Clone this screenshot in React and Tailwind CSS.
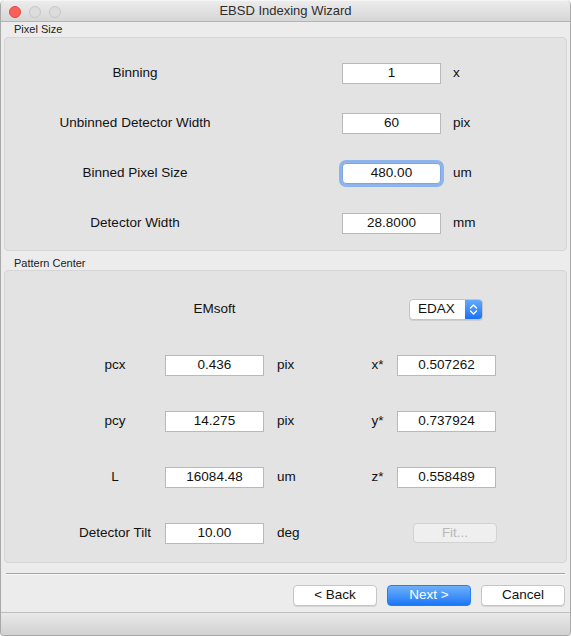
import React from "react";

const font = { fontFamily: '"Liberation Sans", Arial, sans-serif' };

function Input({ value, focused }) {
  if (focused) {
    return (
      <div className="w-[99px] h-[21px] rounded-[4px] shadow-[0_0_0_3px_#8db4ec] bg-white border border-[#7ea6dd] flex items-center justify-center text-[13.5px] text-[#111]">
        {value}
      </div>
    );
  }
  return (
    <div className="w-[99px] h-[21px] bg-white border border-[#b9b9b9] flex items-center justify-center text-[13.5px] text-[#111]">
      {value}
    </div>
  );
}

function PixelRow({ label, value, unit, focused }) {
  return (
    <div className="h-[50px] flex items-center">
      <div className="w-[260px] text-center text-[13.5px] text-[#111]">{label}</div>
      <div className="ml-[77px]">
        <Input value={value} focused={focused} />
      </div>
      <div className="ml-[12px] text-[13.5px] text-[#111]">{unit}</div>
    </div>
  );
}

function PcRow({ label, value, unit, rlabel, rvalue }) {
  return (
    <div className="h-[56px] flex items-center">
      <div className="ml-[65px] w-[90px] text-center text-[13.5px] text-[#111]">{label}</div>
      <div className="ml-[5px]">
        <Input value={value} />
      </div>
      <div className="ml-[13px] w-[81px] text-[13.5px] text-[#111]">{unit}</div>
      <div className="w-[39px] text-center text-[13.5px] text-[#111]">{rlabel}</div>
      <Input value={rvalue} />
    </div>
  );
}

export default function App() {
  return (
    <div style={font} className="w-[571px] h-[636px] bg-white">
      <div className="w-[571px] h-[636px] flex flex-col border-x border-b border-[#a9a9a9] rounded-t-[5px] rounded-b-[4px] overflow-hidden bg-[#ececec]">
        {/* Title bar */}
        <div className="h-[22px] shrink-0 relative flex items-center justify-center bg-gradient-to-b from-[#ececec] to-[#d6d6d6] border-b border-[#b4b4b4] border-t border-t-[#f6f6f6]">
          <div className="absolute left-[8px] top-[5px] flex gap-[8px]">
            <div className="w-[12px] h-[12px] rounded-full bg-[#fc5f57] border border-[#df4943]" />
            <div className="w-[12px] h-[12px] rounded-full bg-[#dcdcdc] border border-[#c6c6c6]" />
            <div className="w-[12px] h-[12px] rounded-full bg-[#dcdcdc] border border-[#c6c6c6]" />
          </div>
          <div className="text-[13px] text-[#2e2e2e]">EBSD Indexing Wizard</div>
        </div>

        {/* Pixel Size */}
        <div className="h-[15px] shrink-0 flex items-center pl-[13px] text-[11px] text-[#222] leading-none">Pixel Size</div>
        <div className="mx-[3px] h-[214px] shrink-0 bg-[#e3e3e3] border border-[#d6d6d6] rounded-[4px] pt-[10px]">
          <PixelRow label="Binning" value="1" unit="x" />
          <PixelRow label="Unbinned Detector Width" value="60" unit="pix" />
          <PixelRow label="Binned Pixel Size" value="480.00" unit="um" focused />
          <PixelRow label="Detector Width" value="28.8000" unit="mm" />
        </div>

        {/* Pattern Center */}
        <div className="h-[19px] shrink-0 flex items-end pb-[1px] pl-[13px] text-[11px] text-[#222] leading-none">Pattern Center</div>
        <div className="mx-[3px] h-[293px] shrink-0 bg-[#e3e3e3] border border-[#d6d6d6] rounded-[4px] pt-[10px]">
          <div className="h-[56px] flex items-center">
            <div className="ml-[160px] w-[99px] text-center text-[13.5px] text-[#111]">EMsoft</div>
            <div className="ml-[145px] w-[74px] h-[21px] rounded-[4px] bg-white border border-[#c4c4c4] flex overflow-hidden shadow-[0_1px_0_#cfcfcf]">
              <div className="flex-1 pl-[8px] flex items-center text-[13.5px] text-[#111]">EDAX</div>
              <div className="w-[17px] h-full bg-gradient-to-b from-[#62a8fb] to-[#1a70f4] flex items-center justify-center">
                <svg width="9" height="13" viewBox="0 0 9 13" fill="none" stroke="white" strokeWidth="1.4" strokeLinecap="round" strokeLinejoin="round">
                  <path d="M1.5 5 L4.5 2 L7.5 5" />
                  <path d="M1.5 8 L4.5 11 L7.5 8" />
                </svg>
              </div>
            </div>
          </div>
          <PcRow label="pcx" value="0.436" unit="pix" rlabel="x*" rvalue="0.507262" />
          <PcRow label="pcy" value="14.275" unit="pix" rlabel="y*" rvalue="0.737924" />
          <PcRow label="L" value="16084.48" unit="um" rlabel="z*" rvalue="0.558489" />
          <div className="h-[56px] flex items-center">
            <div className="ml-[65px] w-[90px] text-center text-[13.5px] text-[#111]">Detector Tilt</div>
            <div className="ml-[5px]">
              <Input value="10.00" />
            </div>
            <div className="ml-[13px] w-[81px] text-[13.5px] text-[#111]">deg</div>
            <div className="w-[39px]" />
            <div className="ml-[16px] w-[84px] h-[20px] rounded-[4px] bg-[#efefef] border border-[#d2d2d2] flex items-center justify-center text-[13.5px] text-[#b8b8b8]">Fit...</div>
          </div>
        </div>

        {/* Separator */}
        <div className="h-[10px] shrink-0" />
        <div className="mx-[5px] h-[1px] shrink-0 bg-[#a3a3a3]" />
        <div className="mx-[5px] h-[1px] shrink-0 bg-[#fbfbfb]" />

        {/* Buttons */}
        <div className="h-[37px] shrink-0 flex items-start justify-end pt-[10px] pr-[5px] gap-[10px]">
          <div className="w-[84px] h-[21px] rounded-[4px] bg-white border border-[#c6c6c6] flex items-center justify-center text-[13.5px] text-[#111] shadow-[0_1px_0_#d4d4d4]">&lt; Back</div>
          <div className="w-[84px] h-[21px] rounded-[4px] bg-gradient-to-b from-[#6cb0fb] to-[#1677f6] border border-[#2a7cf0] flex items-center justify-center text-[13.5px] text-white">Next &gt;</div>
          <div className="w-[84px] h-[21px] rounded-[4px] bg-white border border-[#c6c6c6] flex items-center justify-center text-[13.5px] text-[#111] shadow-[0_1px_0_#d4d4d4]">Cancel</div>
        </div>

        {/* Bottom bar */}
        <div className="flex-1 border-t border-[#bdbdbd] bg-gradient-to-b from-[#e9e9e9] to-[#d1d1d1]" />
      </div>
    </div>
  );
}
